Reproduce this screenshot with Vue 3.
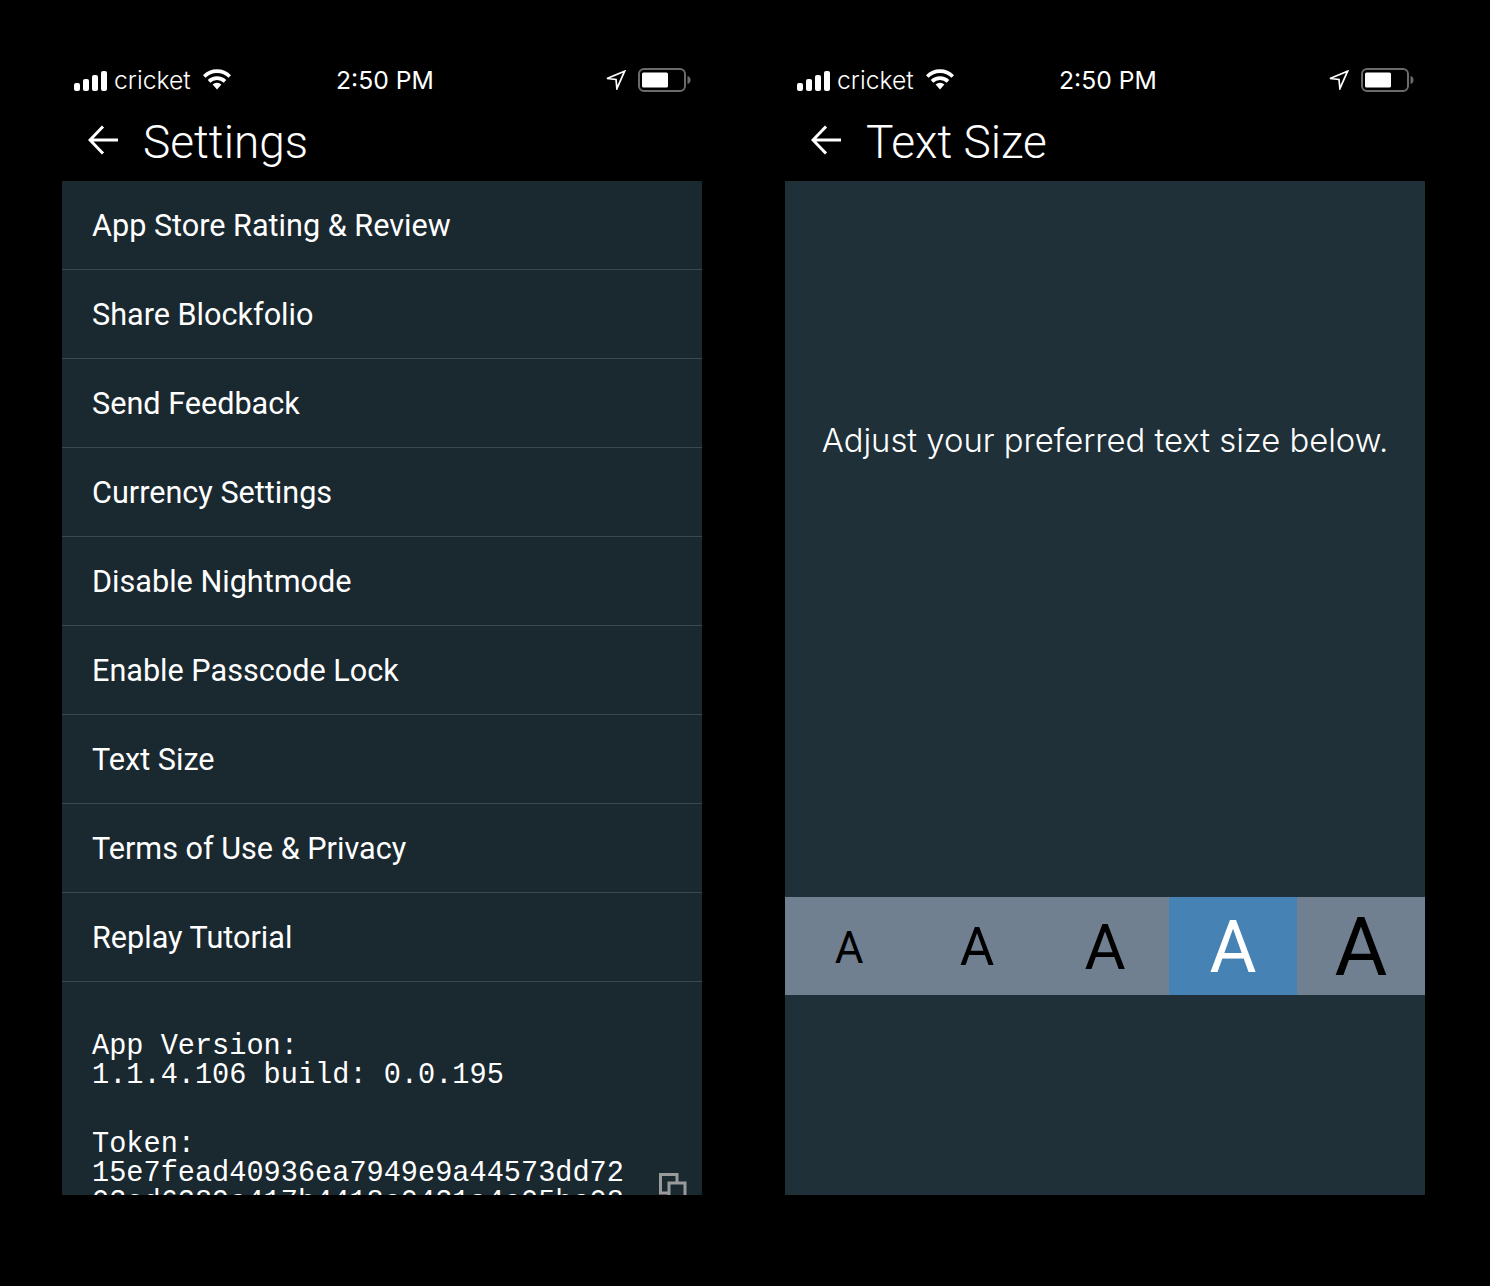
<script setup>
const menuItems = [
  'App Store Rating & Review',
  'Share Blockfolio',
  'Send Feedback',
  'Currency Settings',
  'Disable Nightmode',
  'Enable Passcode Lock',
  'Text Size',
  'Terms of Use & Privacy',
  'Replay Tutorial',
]

const sizes = [
  { id: 1, font: 44 },
  { id: 2, font: 53 },
  { id: 3, font: 63 },
  { id: 4, font: 72, active: true },
  { id: 5, font: 81 },
]

const screens = ['Settings', 'Text Size']
</script>

<template>
  <div class="stage">
    <section v-for="(title, index) in screens" :key="title" class="phone">
      <div class="status">
        <svg class="signal" width="33" height="20" viewBox="0 0 33 20" fill="#fff">
          <rect x="0" y="12" width="6" height="8" rx="2" />
          <rect x="9" y="8" width="6" height="12" rx="2" />
          <rect x="18" y="4" width="6" height="16" rx="2" />
          <rect x="27" y="0" width="6" height="20" rx="2" />
        </svg>
        <span class="carrier">cricket</span>
        <svg class="wifi" width="28" height="21" viewBox="0 0 28 21" fill="none" stroke="#fff" stroke-width="3.6">
          <path d="M1.2 7.5A18 18 0 0 1 26.8 7.5" />
          <path d="M6 12.4A11.5 11.5 0 0 1 22 12.4" />
          <path d="M9.6 15.6A6.4 6.4 0 0 1 18.4 15.6L14 20.6Z" fill="#fff" stroke="none" />
        </svg>
        <span class="time">2:50 PM</span>
        <svg class="location" width="20" height="20" viewBox="0 0 20 20" fill="none" stroke="#fff" stroke-width="1.7" stroke-linejoin="miter">
          <path d="M1 8.5L18.6 1.2L10.9 18.6L10 9.5Z" />
        </svg>
        <svg class="battery" width="53" height="24" viewBox="0 0 53 24" fill="none">
          <rect x="1" y="1" width="46" height="22" rx="5" stroke="#6b6b6b" stroke-width="2" />
          <rect x="4" y="4.5" width="26" height="15" rx="1.5" fill="#fff" />
          <path d="M49.5 8C51.5 8.5 52.5 10 52.5 12S51.5 15.5 49.5 16Z" fill="#6b6b6b" />
        </svg>
      </div>

      <header class="navbar">
        <svg class="back" width="30" height="30" viewBox="0 0 30 30" fill="none" stroke="#fff" stroke-width="3">
          <path d="M30 15H2M15 1.5L2 15L15 28.5" />
        </svg>
        <h1 class="title">{{ title }}</h1>
      </header>

      <div v-if="index === 0" class="body settings">
        <ul class="menu">
          <li v-for="item in menuItems" :key="item" class="menu-row">{{ item }}</li>
        </ul>
        <div class="meta">
          <p class="meta-block">App Version:<br />1.1.4.106 build: 0.0.195</p>
          <div class="token">
            <p class="meta-block">Token:<br />15e7fead40936ea7949e9a44573dd72<br />03ed6389c417b4418c0431a4c05bc08</p>
            <svg class="copy" width="28" height="28" viewBox="0 0 28 28" fill="none" stroke="#9a9a9a" stroke-width="3">
              <path d="M10 20H1.5V1.5H18V10" />
              <rect x="10" y="10" width="16" height="16" />
            </svg>
          </div>
        </div>
      </div>

      <div v-else class="body text-size">
        <p class="hint">Adjust your preferred text size below.</p>
        <div class="size-bar">
          <div
            v-for="size in sizes"
            :key="size.id"
            class="size-cell"
            :class="{ active: size.active }"
            :style="{ fontSize: size.font + 'px' }"
          >A</div>
        </div>
      </div>
    </section>
  </div>
</template>

<style>
html, body {
  margin: 0;
  background: #000;
}
</style>

<style scoped>
.stage {
  width: 1490px;
  height: 1286px;
  box-sizing: border-box;
  padding: 58px 65px 91px 62px;
  display: flex;
  gap: 83px;
  background: #000;
  color: #fff;
  font-family: Roboto, sans-serif;
}

.phone {
  width: 640px;
  display: flex;
  flex-direction: column;
  overflow: hidden;
}

.status {
  height: 44px;
  flex: none;
  display: flex;
  align-items: center;
  padding: 0 11px 0 12px;
}

.signal {
  margin-right: 7px;
  margin-top: 1px;
}

.carrier {
  font-family: Inter, sans-serif;
  font-size: 24.7px;
  font-weight: 300;
  width: 89px;
}

.wifi {
  margin-top: -2px;
}

.time {
  font-family: Inter, sans-serif;
  font-size: 24.7px;
  font-weight: 400;
  margin-left: 105px;
  width: 99px;
  white-space: nowrap;
}

.location {
  margin-left: auto;
  margin-right: 12px;
}

.battery {
  display: block;
}

.navbar {
  height: 79px;
  flex: none;
  display: flex;
  align-items: center;
  padding-left: 26px;
}

.back {
  margin-top: -4px;
}

.title {
  margin: 0 0 0 25px;
  font-size: 46px;
  font-weight: 300;
  line-height: 1;
}

.body {
  flex: 1;
  min-height: 0;
}

.settings {
  background: #1a2830;
  overflow: hidden;
}

.menu {
  list-style: none;
  margin: 0;
  padding: 0;
}

.menu-row {
  height: 88px;
  line-height: 90px;
  padding-left: 30px;
  font-size: 30.6px;
  border-bottom: 1px solid #3c474e;
}

.meta {
  padding: 50px 30px 0;
  font-family: "Liberation Mono", monospace;
  font-size: 28.6px;
  line-height: 29px;
}

.meta-block {
  margin: 0 0 40px;
  white-space: nowrap;
}

.token {
  display: flex;
  align-items: flex-start;
}

.copy {
  flex: none;
  margin: 43px 0 0 35px;
}

.text-size {
  background: #1f3039;
  display: flex;
  flex-direction: column;
}

.hint {
  margin: 236px 0 0;
  text-align: center;
  font-family: Inter, sans-serif;
  font-size: 32.8px;
  line-height: 46px;
  font-weight: 300;
  white-space: nowrap;
}

.size-bar {
  margin-top: auto;
  margin-bottom: 200px;
  height: 98px;
  display: grid;
  grid-template-columns: repeat(5, 1fr);
  background: #708090;
  color: #000;
}

.size-cell {
  display: flex;
  align-items: center;
  justify-content: center;
  line-height: 1;
  padding-top: 3px;
}

.size-cell.active {
  background: #4682b4;
  color: #fff;
}
</style>
